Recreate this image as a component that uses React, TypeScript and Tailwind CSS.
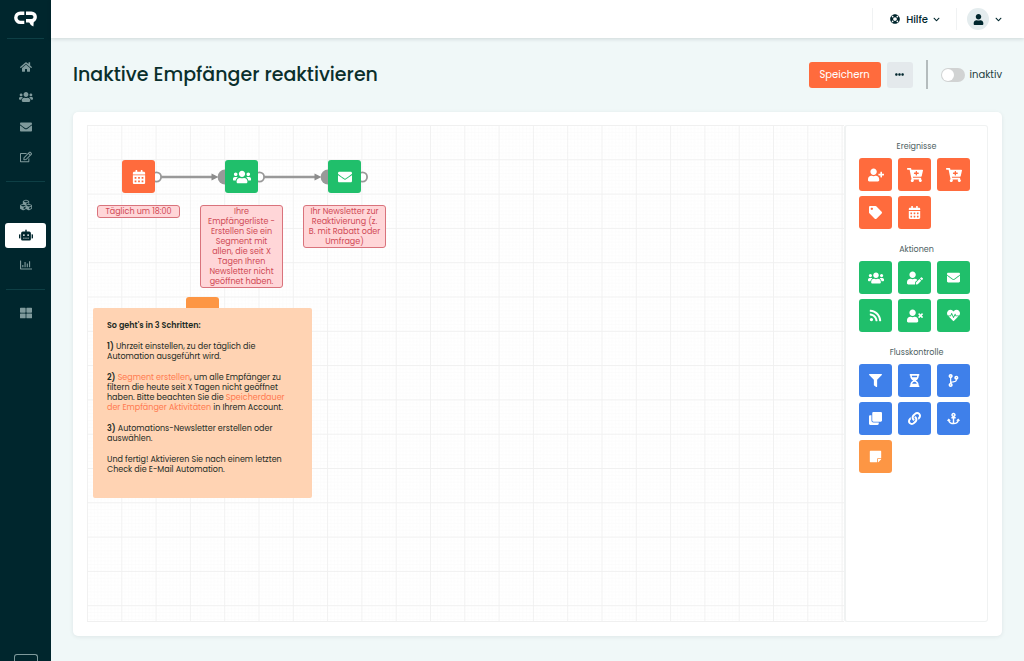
import type { ReactNode } from "react"
import type { IconType } from "react-icons"
import {
  FaAnchor,
  FaCalendarAlt,
  FaCartPlus,
  FaChevronDown,
  FaClone,
  FaCodeBranch,
  FaCubes,
  FaEllipsisH,
  FaEnvelope,
  FaFilter,
  FaHeartbeat,
  FaHome,
  FaHourglassHalf,
  FaLifeRing,
  FaLink,
  FaRegChartBar,
  FaRegEdit,
  FaRobot,
  FaRss,
  FaStickyNote,
  FaTag,
  FaThLarge,
  FaUser,
  FaUserEdit,
  FaUserPlus,
  FaUsers,
  FaUserTimes,
} from "react-icons/fa"

// wide: glyph is broader than tall, so its box has to be larger
type NavItem = { label: string; icon: IconType; wide?: boolean; active?: boolean }

const navGroups: NavItem[][] = [
  [
    { label: "Start", icon: FaHome },
    { label: "Empfänger", icon: FaUsers, wide: true },
    { label: "E-Mails", icon: FaEnvelope },
    { label: "Formulare", icon: FaRegEdit },
  ],
  [
    { label: "Integrationen", icon: FaCubes },
    { label: "Automation", icon: FaRobot, wide: true, active: true },
    { label: "Reports", icon: FaRegChartBar },
  ],
  [{ label: "Apps", icon: FaThLarge }],
]

type Tool = { label: string; icon: IconType; color: string; wide?: boolean }

const toolGroups: { title: string; tools: Tool[] }[] = [
  {
    title: "Ereignisse",
    tools: [
      { label: "Neuer Empfänger", icon: FaUserPlus, color: "bg-[#ff6b3d]", wide: true },
      { label: "Bestellung", icon: FaCartPlus, color: "bg-[#ff6b3d]", wide: true },
      { label: "Warenkorb", icon: FaCartPlus, color: "bg-[#ff6b3d]", wide: true },
      { label: "Tag", icon: FaTag, color: "bg-[#ff6b3d]" },
      { label: "Datum", icon: FaCalendarAlt, color: "bg-[#ff6b3d]" },
    ],
  },
  {
    title: "Aktionen",
    tools: [
      { label: "Empfängerliste", icon: FaUsers, color: "bg-[#20bf6b]", wide: true },
      { label: "Empfänger bearbeiten", icon: FaUserEdit, color: "bg-[#20bf6b]", wide: true },
      { label: "E-Mail senden", icon: FaEnvelope, color: "bg-[#20bf6b]" },
      { label: "Webhook", icon: FaRss, color: "bg-[#20bf6b]" },
      { label: "Empfänger entfernen", icon: FaUserTimes, color: "bg-[#20bf6b]", wide: true },
      { label: "Aktivität", icon: FaHeartbeat, color: "bg-[#20bf6b]" },
    ],
  },
  {
    title: "Flusskontrolle",
    tools: [
      { label: "Filter", icon: FaFilter, color: "bg-[#3f80ea]" },
      { label: "Warten", icon: FaHourglassHalf, color: "bg-[#3f80ea]" },
      { label: "Verzweigung", icon: FaCodeBranch, color: "bg-[#3f80ea]" },
      { label: "Duplizieren", icon: FaClone, color: "bg-[#3f80ea]" },
      { label: "Verknüpfung", icon: FaLink, color: "bg-[#3f80ea]" },
      { label: "Anker", icon: FaAnchor, color: "bg-[#3f80ea]" },
      { label: "Notiz", icon: FaStickyNote, color: "bg-[#fd9644]" },
    ],
  },
]

function Logo() {
  return (
    <svg className="h-4 w-[23px]" viewBox="0 0 23 16" fill="none" stroke="#fff" strokeWidth="3.4">
      <path d="M10.300 2.200H6.400a4.600 4.600 0 0 0 0 9.200h3.900" />
      <path d="M12 2.200h5.400a3.800 3.800 0 0 1 0 7.600H12" />
      <path d="M14.200 9.500h5.600l-.4 5.900-2.600-1.400z" fill="#fff" stroke="none" />
    </svg>
  )
}

function Sidebar() {
  return (
    <aside className="sticky top-0 flex h-screen w-[51px] shrink-0 flex-col items-center overflow-hidden bg-[#00262d]">
      <a href="#" aria-label="Startseite" className="flex h-[38px] items-center">
        <Logo />
      </a>
      <div className="h-px w-[37px] bg-[#0e3f45]" />
      <nav className="flex w-full flex-col px-[5px] pt-[13px]">
        {navGroups.map((group, idx) => (
          <div key={idx}>
            {idx > 0 && (
              <div className="flex h-[18px] items-center px-px">
                <div className="h-px w-full bg-[#0e3f45]" />
              </div>
            )}
            {group.map(({ label, icon: Icon, wide, active }) => (
              <a key={label} href="#" aria-label={label} className="flex h-[30px] items-center">
                <span
                  className={`flex h-[25px] w-full items-center justify-center rounded-[3px] ${
                    active ? "bg-white text-[#00262d]" : "text-[#7f9a9c]"
                  }`}
                >
                  <Icon className={wide ? "size-3.5" : "size-3"} />
                </span>
              </a>
            ))}
          </div>
        ))}
      </nav>
      <button
        aria-label="Menü ausklappen"
        className="mt-auto h-[7px] w-6 rounded-t-[3px] border border-b-0 border-[#7f9a9c]"
      />
    </aside>
  )
}

function Header() {
  return (
    <header className="z-10 flex h-[38px] shrink-0 items-center justify-end bg-white pr-[22px] text-[#00262d] shadow-[0_1px_4px_rgba(0,30,35,0.15)]">
      <div className="h-[22px] w-px bg-[#f0f2f3]" />
      <button className="flex items-center px-4 text-[10px] font-medium">
        <FaLifeRing className="mr-1.5 ml-px size-2.5" />
        Hilfe
        <FaChevronDown className="ml-[5px] size-[7px]" />
      </button>
      <div className="h-[22px] w-px bg-[#f0f2f3]" />
      <button aria-label="Konto" className="ml-2.5 flex items-center gap-1.5">
        <span className="flex size-[22px] items-center justify-center rounded-full bg-[#e4ecee]">
          <FaUser className="size-[11px]" />
        </span>
        <FaChevronDown className="size-[7px]" />
      </button>
    </header>
  )
}

function Grid() {
  return (
    <svg className="absolute inset-0 size-full" aria-hidden="true">
      <defs>
        <pattern id="minor" width="3.43" height="3.43" patternUnits="userSpaceOnUse">
          <path d="M3.43 0H0V3.43" fill="none" stroke="#fafafa" />
        </pattern>
        <pattern id="major" width="34.3" height="34.3" patternUnits="userSpaceOnUse">
          <rect width="34.3" height="34.3" fill="url(#minor)" />
          <path d="M34.3 0H0V34.3" fill="none" stroke="#f0f0f0" strokeWidth="1.8" />
        </pattern>
      </defs>
      <rect width="100%" height="100%" fill="url(#major)" />
    </svg>
  )
}

function Connections() {
  return (
    <svg className="absolute top-9 left-0 h-8 w-[300px]" viewBox="0 0 300 32" aria-hidden="true">
      {[34, 137].map((x) => (
        <g key={x} transform={`translate(${x} 0)`}>
          <path d="M38 16h54" stroke="#999" strokeWidth="2.4" />
          <path d="M90.500 12.400l7 3.600-7 3.600z" fill="#8c8c8c" />
          <circle cx="104" cy="16" r="7.400" fill="#999" />
        </g>
      ))}
      {[69.5, 172.5, 275.5].map((x) => (
        <circle key={x} cx={x} cy="16" r="4.600" fill="#fff" stroke="#999" strokeWidth="1.800" />
      ))}
    </svg>
  )
}

type NodeProps = { icon: IconType; color: string; place: string; wide?: boolean; children: ReactNode }

function Node({ icon: Icon, color, place, wide, children }: NodeProps) {
  return (
    <div className={`absolute top-[35px] flex w-[83px] flex-col items-center ${place}`}>
      <div className={`flex size-[33px] items-center justify-center rounded-[3px] text-white ${color}`}>
        <Icon className={wide ? "size-[18px]" : "size-3.5"} />
      </div>
      <p className="mt-3 w-full rounded-[3px] border border-[#d9737c] bg-[#ffd6d8] pt-px text-center text-[8px] leading-[10px] text-[#d04a56]">
        {children}
      </p>
    </div>
  )
}

function StickyNote() {
  return (
    <div className="absolute top-[172px] left-1.5 flex w-[219px] flex-col items-center">
      <div className="h-[11px] w-[33px] rounded-t-[3px] bg-[#fd9644]" />
      <div className="flex h-[190px] w-full flex-col gap-[11px] rounded-[2px] bg-[#ffd3b3] px-3.5 pt-[13px] text-[8px] leading-[10px] text-[#1d2b25]">
        <p className="font-semibold">So geht's in 3 Schritten:</p>
        <p>
          <b className="font-semibold">1)</b> Uhrzeit einstellen, zu der täglich die
          <br />
          Automation ausgeführt wird.
        </p>
        <p className="whitespace-nowrap">
          <b className="font-semibold">2)</b>{" "}
          <a href="#" className="text-[#ff7a50]">
            Segment erstellen
          </a>
          , um alle Empfänger zu
          <br />
          filtern die heute seit X Tagen nicht geöffnet
          <br />
          haben. Bitte beachten Sie die{" "}
          <a href="#" className="text-[#ff7a50]">
            Speicherdauer
            <br />
            der Empfänger Aktivitäten
          </a>{" "}
          in Ihrem Account.
        </p>
        <p>
          <b className="font-semibold">3)</b> Automations-Newsletter erstellen oder
          <br />
          auswählen.
        </p>
        <p>
          Und fertig! Aktivieren Sie nach einem letzten
          <br />
          Check die E-Mail Automation.
        </p>
      </div>
    </div>
  )
}

function Palette() {
  return (
    <div className="w-36 shrink-0 rounded-[3px] border border-l-2 border-[#f0f2f2] px-[13px] pt-3.5">
      {toolGroups.map((group) => (
        <section key={group.title} className="mb-3.5">
          <h2 className="mb-1 text-center text-[8px] leading-[14px] text-[#4d6062]">{group.title}</h2>
          <div className="flex flex-wrap gap-x-1.5 gap-y-[5px]">
            {group.tools.map(({ label, icon: Icon, color, wide }) => (
              <button
                key={label}
                aria-label={label}
                className={`flex size-[33px] items-center justify-center rounded-[3px] text-white ${color}`}
              >
                <Icon className={wide ? "size-4" : "size-[13px]"} />
              </button>
            ))}
          </div>
        </section>
      ))}
    </div>
  )
}

export default function App() {
  return (
    <div className="flex min-h-screen bg-[#f0f8f8] font-['Poppins','Inter',sans-serif] text-[#00262d]">
      <Sidebar />
      <div className="flex min-w-0 flex-1 flex-col">
        <Header />
        <main className="flex flex-1 flex-col px-[22px] pt-[22px] pb-[25px]">
          <div className="flex h-[29px] items-center">
            <h1 className="mr-auto text-[19px] leading-[29px] font-medium text-[#0a2f2c]">
              Inaktive Empfänger reaktivieren
            </h1>
            <button className="h-[26px] w-[72px] rounded-[3px] bg-[#ff6b3d] text-[10px] text-white">Speichern</button>
            <button
              aria-label="Weitere Optionen"
              className="ml-1.5 flex h-[26px] w-[26px] items-center justify-center rounded-[3px] bg-[#e4e9ec]"
            >
              <FaEllipsisH className="size-[9px]" />
            </button>
            <div className="ml-[13px] h-[29px] w-0.5 bg-[#b4bcbd]" />
            <label className="ml-[13px] flex items-center gap-[5px] text-[10px] text-[#24403f]">
              <input
                type="checkbox"
                className="h-3.5 w-6 appearance-none rounded-full bg-[#d1d3d3] p-px before:block before:size-3 before:rounded-full before:bg-white checked:bg-[#20bf6b] checked:before:ml-auto"
              />
              inaktiv
            </label>
          </div>

          <div className="mt-[23px] flex flex-1 rounded-[5px] bg-white p-3.5 pt-[13px] shadow-[0_1px_4px_rgba(0,30,35,0.08)]">
            <div className="relative min-w-0 flex-1 overflow-hidden border-b border-[#f0f0f0]">
              <Grid />
              <Connections />
              <Node icon={FaCalendarAlt} color="bg-[#ff6b3d]" place="left-2.5">
                Täglich um 18:00
              </Node>
              <Node icon={FaUsers} color="bg-[#20bf6b]" place="left-[113px]" wide>
                Ihre
                <br />
                Empfängerliste -
                <br />
                Erstellen Sie ein
                <br />
                Segment mit
                <br />
                allen, die seit X
                <br />
                Tagen Ihren
                <br />
                Newsletter nicht
                <br />
                geöffnet haben.
              </Node>
              <Node icon={FaEnvelope} color="bg-[#20bf6b]" place="left-[216px]">
                Ihr Newsletter zur
                <br />
                Reaktivierung (z.
                <br />
                B. mit Rabatt oder
                <br />
                Umfrage)
              </Node>
              <StickyNote />
            </div>
            <Palette />
          </div>
        </main>
      </div>
    </div>
  )
}
